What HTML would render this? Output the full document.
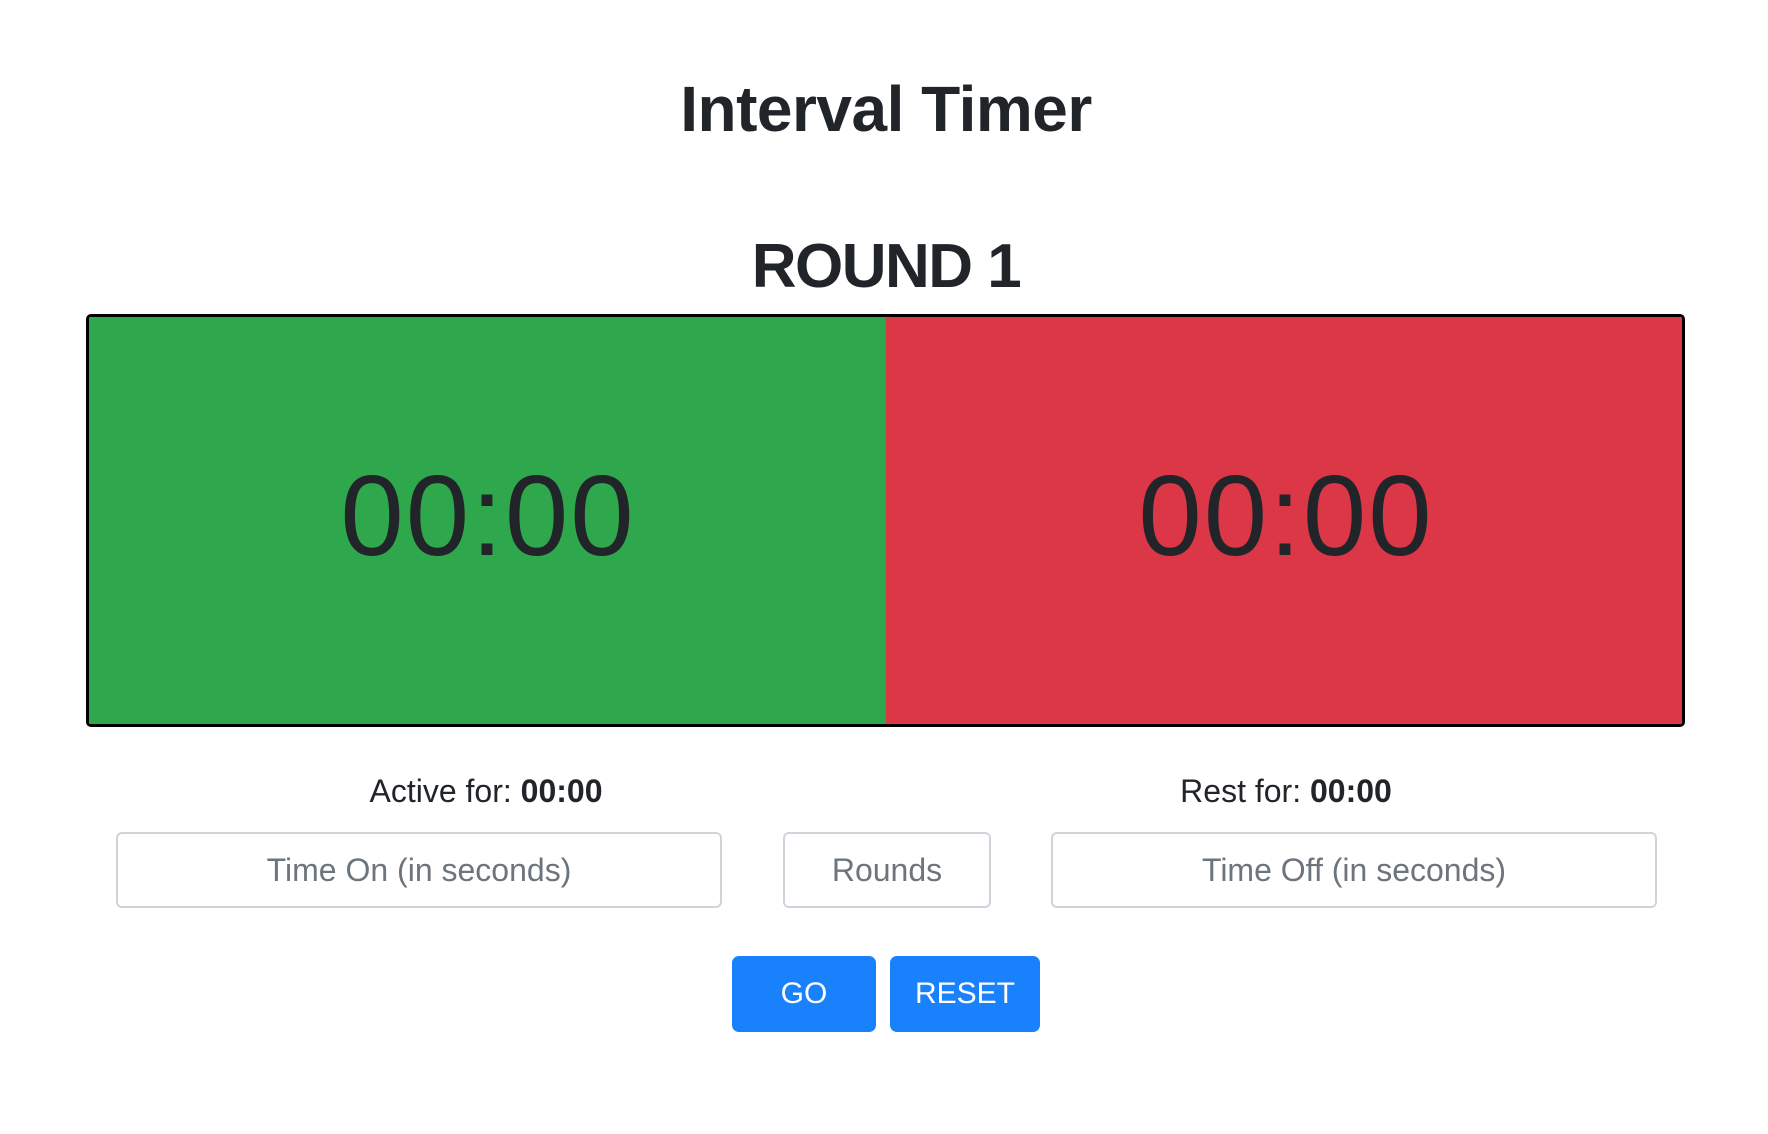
<!DOCTYPE html>
<html><head><meta charset="utf-8"><style>
html,body{margin:0;padding:0;width:1768px;height:1134px;background:#fff;overflow:hidden;font-family:"Liberation Sans",sans-serif;color:#212529}
.a{position:absolute;line-height:1;white-space:nowrap}
.c{transform:translateX(-50%)}
#box{position:absolute;left:86px;top:314px;width:1593px;height:407px;border:3px solid #000;border-radius:5px;overflow:hidden}
#g{position:absolute;left:0;top:0;width:797px;height:100%;background:#2fa74c}
#r{position:absolute;left:797px;top:0;right:0;height:100%;background:#dc3747}
.inp{position:absolute;top:832px;height:76px;border:2px solid #d0d4da;border-radius:6px;box-sizing:border-box;color:#6c757d;font-size:32px;display:flex;align-items:center;justify-content:center}
.btn{position:absolute;top:956px;height:76px;background:#1981fb;border-radius:7px;color:#fff;font-size:30px;display:flex;align-items:center;justify-content:center}
</style></head><body>
<div class="a c" style="left:886px;top:77px;font-size:64px;font-weight:bold;letter-spacing:-0.5px">Interval Timer</div>
<div class="a c" style="left:886px;top:236px;font-size:62px;font-weight:bold;letter-spacing:-1.5px">ROUND 1</div>
<div id="box"><div id="g"></div><div id="r"></div></div>
<div class="a c" style="left:488px;top:460px;font-size:114px;letter-spacing:2px">00:00</div>
<div class="a c" style="left:1286px;top:460px;font-size:114px;letter-spacing:2px">00:00</div>
<div class="a c" style="left:486px;top:775px;font-size:32px">Active for: <b>00:00</b></div>
<div class="a c" style="left:1286px;top:775px;font-size:32px">Rest for: <b>00:00</b></div>
<div class="inp" style="left:116px;width:606px">Time On (in seconds)</div>
<div class="inp" style="left:783px;width:208px">Rounds</div>
<div class="inp" style="left:1051px;width:606px">Time Off (in seconds)</div>
<div class="btn" style="left:732px;width:144px">GO</div>
<div class="btn" style="left:890px;width:150px">RESET</div>
</body></html>
